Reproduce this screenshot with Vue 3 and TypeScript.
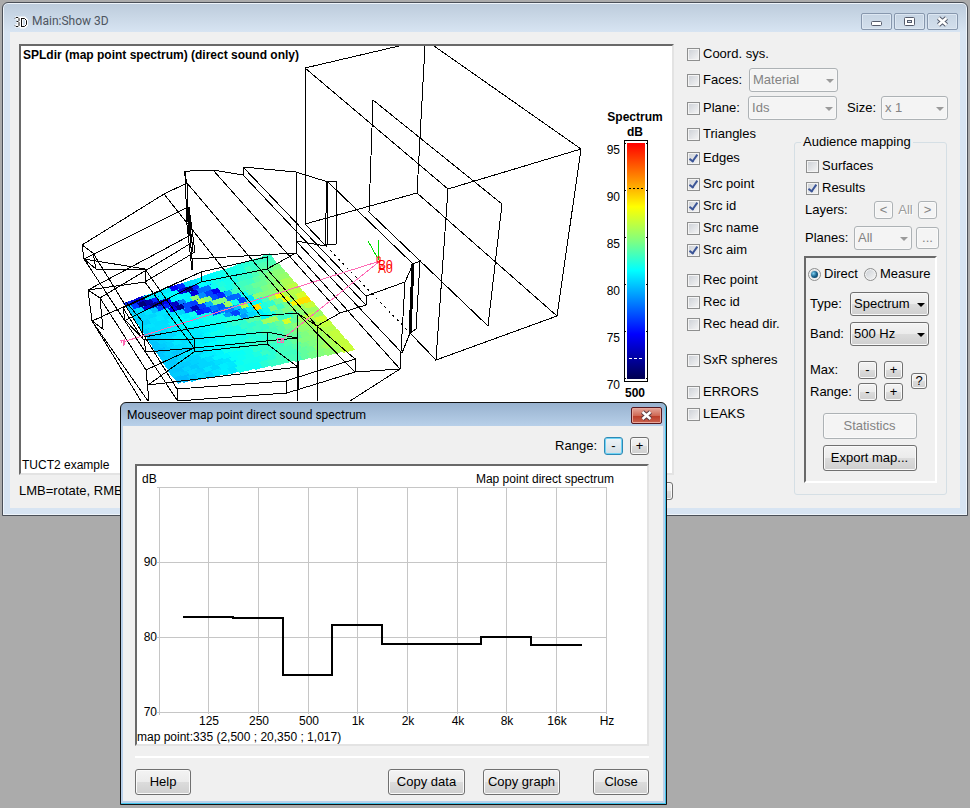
<script setup lang="ts">
import { ref } from 'vue'

interface Toggle {
  id: string
  label: string
  on: boolean
}

interface Cell {
  points: string
  fill: string
}

const topToggle = ref<Toggle>({ id: 'coord', label: 'Coord. sys.', on: false })
const toggleGroups = ref<Toggle[][]>([
  [{ id: 'triangles', label: 'Triangles', on: false }],
  [{ id: 'edges', label: 'Edges', on: true }],
  [
    { id: 'src-point', label: 'Src point', on: true },
    { id: 'src-id', label: 'Src id', on: true },
    { id: 'src-name', label: 'Src name', on: false },
    { id: 'src-aim', label: 'Src aim', on: true },
  ],
  [
    { id: 'rec-point', label: 'Rec point', on: false },
    { id: 'rec-id', label: 'Rec id', on: false },
    { id: 'rec-head', label: 'Rec head dir.', on: false },
  ],
  [{ id: 'spheres', label: 'SxR spheres', on: false }],
  [
    { id: 'errors', label: 'ERRORS', on: false },
    { id: 'leaks', label: 'LEAKS', on: false },
  ],
])
const mappingToggles = ref<Toggle[]>([
  { id: 'surfaces', label: 'Surfaces', on: false },
  { id: 'results', label: 'Results', on: true },
])
const source = ref('direct')

// Room edges, one polyline per entry
const edges: string[] = [
  // stage house
  '399,46 305,68 305,224 417,193 425,46',
  '434,46 581,149 557,316 436,360 448,189 581,149',
  '305,68 448,189',
  '417,193 557,316',
  '305,224 326,246',
  '410,333 436,360',
  '373,100 502,204 488,326 369,212 373,100',
  // ceiling profile and beams
  '184,172 196,170 213,170 243,175 243,167 296,172 328,182 413,264',
  '213,170 340,313',
  '243,175 366,305',
  '243,167 366,296',
  '296,172 296,253',
  '296,241 326,246',
  '296,241 402,353',
  '296,253 400,369',
  '187,183 297,313',
  '164,194 260,315',
  '405,282 366,296 366,305 340,313 317,326',
  // pillar
  '328,181 336,181 336,244 327,245 328,181',
  '327,181 325,246',
  // left gallery
  '187,183 164,194 82,245 84,259 188,207',
  '82,245 93,253 96,269 84,259 145,269 96,269',
  '145,269 145,282 88,290 92,321 103,329 100,298 88,290 189,236',
  '100,298 193,242',
  '145,282 195,252',
  '93,253 177,389',
  '84,259 177,400',
  '145,269 194,339',
  '145,282 194,348',
  '92,321 201,272',
  '92,321 141,401',
  '92,321 148,401',
  '100,298 146,370 149,401',
  // left wall bundle
  '184,172 187,183 188,207 190,236 193,270',
  '185,172 187,225 192,270',
  '189,207 195,252',
  '188,207 193,252',
  // stalls
  '192,259 296,253 267,269 201,282 126,320',
  '267,269 267,257 201,272 201,282',
  '201,272 123,308 125,320 144,340 146,352 194,348 297,338',
  '123,308 142,338 144,340',
  '126,302 142,321 142,338',
  '144,340 194,339 267,332 297,338',
  '194,339 194,352 267,344 267,332',
  '267,344 298,367',
  '194,352 148,385',
  '194,348 146,370',
  '144,337 260,316 297,313 317,326',
  '148,385 298,367',
  '177,401 177,389 286,381 355,359 355,372 287,393 177,401',
  '286,381 287,393',
  '297,313 298,401',
  '298,361 298,390',
  '317,326 317,401',
  '317,326 355,359',
  '297,313 355,372',
  '267,269 317,326',
  '355,372 400,369 350,401',
  '400,369 405,282 413,264 420,261 416,329 410,333 402,353',
]

const heavyEdges: string[] = ['413,264 410,333', '188,207 190,236']

const stops: [number, number[]][] = [
  [70, [0, 0, 80]],
  [74.8, [0, 0, 255]],
  [81.4, [0, 255, 255]],
  [84.6, [128, 255, 128]],
  [88.2, [255, 255, 0]],
  [90.2, [255, 176, 0]],
  [95, [255, 0, 0]],
]

function colourAt(level: number): string {
  const v = Math.max(70, Math.min(95, level))
  let i = 1
  while (i < stops.length - 1 && v > stops[i][0]) i++
  const [v0, c0] = stops[i - 1]
  const [v1, c1] = stops[i]
  const t = (v - v0) / (v1 - v0)
  return `rgb(${c0.map((c, k) => Math.round(c + (c1[k] - c) * t)).join(',')})`
}

function noise(i: number, j: number): number {
  const n = Math.sin(i * 127.1 + j * 311.7) * 43758.5453
  return n - Math.floor(n)
}

function levelAt(x: number, y: number, u: number, v: number, n: number): number {
  let level = 80.2 + u * 3 + u * u * 2 + (n - 0.5) * 0.7
  level += Math.max(0, u - 0.7) * 5 * Math.min(1, v * 3)
  level -= Math.max(0, 0.3 - v) * u * 8
  if (u < 0.35) level += 0.3 - v * 0.8
  const first = 284 + (x - 160) * 0.17
  const second = 302 + (x - 127) * 0.08
  const fade = Math.max(0, 1 - Math.max(0, x - 170) / 190)
  const hit = (d: number, w: number) => Math.max(0, 1 - Math.pow(Math.abs(d) / w, 3))
  level -= hit(y - first, 5) * (3 + 7 * n) * fade * 1.2
  level -= hit(y - second, 6) * (4 + 6 * n) * fade * 1.1
  if (x > 195 && y > first + 5 && y < second - 5) level += 2 + 2.5 * n
  if (x > 250 && x < 330 && y > 294 && y < 322) level += n * 3.5
  return level
}

// Bilinear grid over the audience plane
function buildCells(): Cell[] {
  const a = [125, 303]
  const b = [269, 254]
  const c = [354, 349]
  const d = [178, 382]
  const cols = 22
  const rows = 20
  const at = (u: number, v: number): number[] =>
    [0, 1].map(
      (k) =>
        a[k] * (1 - u) * (1 - v) + b[k] * u * (1 - v) + c[k] * u * v + d[k] * (1 - u) * v,
    )
  const out: Cell[] = []
  for (let j = 0; j < rows; j++) {
    for (let i = 0; i < cols; i++) {
      const shift = j % 2 ? 0.3 : 0
      const u0 = Math.max(0, (i - shift) / cols)
      const u1 = i === cols - 1 ? 1 : (i + 1 - shift) / cols
      const u = (u0 + u1) / 2
      const v = (j + 0.5) / rows
      const [x, y] = at(u, v)
      // cells are wide and nearly level
      const w = (at(u1, v)[0] - at(u0, v)[0]) / 2 + 2
      const h = 3
      const pts = [
        [x - w - 1, y - h + 2],
        [x + w - 3, y - h - 1],
        [x + w + 1, y + h - 1],
        [x - w + 3, y + h + 2],
      ]
      out.push({
        points: pts.map((p) => p.map((q) => Math.round(q)).join(',')).join(' '),
        fill: colourAt(levelAt(x, y, u, v, noise(i, j))),
      })
    }
  }
  return out
}

const cells = buildCells()

const scale = [95, 90, 85, 80, 75, 70].map((value, i) => ({ value, y: 143 + i * 47 }))

const bands = [
  { x: 208, label: '125' },
  { x: 258, label: '250' },
  { x: 308, label: '500' },
  { x: 357, label: '1k' },
  { x: 407, label: '2k' },
  { x: 457, label: '4k' },
  { x: 506, label: '8k' },
  { x: 556, label: '16k' },
  { x: 606, label: 'Hz' },
]
const levels = [
  { y: 562, label: '90' },
  { y: 637, label: '80' },
  { y: 712, label: '70' },
]
</script>

<template>
  <div class="desktop">
    <section class="window main" aria-label="Main:Show 3D">
      <header class="titlebar">
        <svg class="app-icon" width="15" height="15" viewBox="0 0 15 15" aria-hidden="true">
          <g fill="none" stroke="#fff" stroke-width="3">
            <path d="M1 4h3.500l.5 3-1 1 1 1-.5 3h-3.500M7.500 4h3l2 2v5l-2 2h-3z" />
          </g>
          <g fill="none" stroke="#111" stroke-width="1">
            <path d="M1 4.500l1-1h2l1 1v2l-1 1h-1.500M4 7.500l1 1v3l-1 1h-2l-1-1" />
            <path d="M7.500 4v9M7.500 4.500h3l2 2v4l-2 2h-3" />
          </g>
        </svg>
        <h1>Main:Show 3D</h1>
        <div class="caption-buttons">
          <button type="button" class="caption" aria-label="Minimize">
            <svg width="29" height="15" viewBox="0 0 29 15">
              <rect x="9.500" y="7.500" width="10" height="4" rx="1" fill="#fff" stroke="#555b6b" />
            </svg>
          </button>
          <button type="button" class="caption" aria-label="Maximize">
            <svg width="29" height="15" viewBox="0 0 29 15">
              <rect x="9.500" y="3.500" width="10" height="8" rx="1" fill="#fff" stroke="#555b6b" />
              <rect x="12.500" y="6.500" width="4" height="2" fill="#d5e0ec" stroke="#555b6b" />
            </svg>
          </button>
          <button type="button" class="caption" aria-label="Close">
            <svg width="29" height="15" viewBox="0 0 29 15">
              <path d="M10.500 4l8 7M18.500 4l-8 7" stroke="#555b6b" stroke-width="4.500" />
              <path d="M10.500 4l8 7M18.500 4l-8 7" stroke="#fff" stroke-width="2.500" />
            </svg>
          </button>
        </div>
      </header>

      <div class="client">
        <div class="view">
          <div class="sunken">
            <svg class="scene" viewBox="21 46 651 427" role="img" aria-label="Room model">
              <defs>
                <linearGradient id="jet" x1="0" y1="0" x2="0" y2="1">
                  <stop offset="0" stop-color="#f00" />
                  <stop offset="0.190" stop-color="#ffb000" />
                  <stop offset="0.270" stop-color="#ff0" />
                  <stop offset="0.415" stop-color="#80ff80" />
                  <stop offset="0.540" stop-color="#0ff" />
                  <stop offset="0.810" stop-color="#00f" />
                  <stop offset="1" stop-color="#000050" />
                </linearGradient>
              </defs>
              <g shape-rendering="crispEdges">
                <polygon
                  v-for="(cell, i) in cells"
                  :key="i"
                  :points="cell.points"
                  :fill="cell.fill"
                />
              </g>
              <g class="edges">
                <polyline v-for="(edge, i) in edges" :key="i" :points="edge" />
                <polyline v-for="edge in heavyEdges" :key="edge" :points="edge" class="heavy" />
                <polyline points="326,246 410,333" class="dotted" />
              </g>
              <g class="aim">
                <path d="M123 342L380 261L280 341" />
                <path d="M277 338h6v4h-6zM281 338v5M120 340h3v6M121 340v3M124 339v6" />
              </g>
              <path class="axes" d="M368 241l9 16M379 240l-1 20" />
              <path class="marker" d="M377 257h3v5h-3z" />
              <text x="378" y="269" class="source">B0</text>
              <text x="378" y="273" class="source">A0</text>

              <text x="23" y="59" class="bold">SPLdir (map point spectrum) (direct sound only)</text>
              <text x="22" y="469">TUCT2 example</text>

              <text x="635" y="121" class="bold mid">Spectrum</text>
              <text x="635" y="136" class="bold mid">dB</text>
              <g shape-rendering="crispEdges">
                <rect x="624.500" y="140.500" width="23" height="241" fill="#fff" stroke="#000" />
                <rect x="627" y="143" width="18" height="236" fill="url(#jet)" />
                <path d="M629 188.500h14" stroke="#000" stroke-dasharray="2 2" />
                <path d="M629 358.500h14" stroke="#fff" stroke-dasharray="3 2" />
                <path
                  v-for="tick in scale"
                  :key="tick.value"
                  :d="`M624 ${tick.y}.5h2M646 ${tick.y}.5h2`"
                  stroke="#000"
                />
              </g>
              <text v-for="tick in scale" :key="tick.value" x="620" :y="tick.y + 11" class="end">
                {{ tick.value }}
              </text>
              <text x="635" y="397" class="bold mid">500</text>
            </svg>
          </div>
          <footer class="hint">
            <span>LMB=rotate, RMB</span>
            <button type="button" class="btn small" aria-label="View options"></button>
          </footer>
        </div>

        <div class="side">
          <label class="check first">
            <input v-model="topToggle.on" type="checkbox" />{{ topToggle.label }}
          </label>
          <div class="row">
            <label class="check"><input type="checkbox" />Faces:</label>
            <span class="combo wide disabled">
              <select aria-label="Faces" disabled><option>Material</option></select>
            </span>
          </div>
          <div class="row">
            <label class="check"><input type="checkbox" />Plane:</label>
            <span class="combo wide disabled">
              <select aria-label="Plane" disabled><option>Ids</option></select>
            </span>
            <label class="size" for="size">Size:</label>
            <span class="combo medium disabled">
              <select id="size" disabled><option>x 1</option></select>
            </span>
          </div>

          <div class="lower">
            <div class="toggles">
              <div v-for="(group, g) in toggleGroups" :key="g" class="group">
                <label v-for="item in group" :key="item.id" class="check">
                  <input v-model="item.on" type="checkbox" />{{ item.label }}
                </label>
              </div>
            </div>

            <fieldset class="mapping">
              <legend>Audience mapping</legend>
              <label v-for="item in mappingToggles" :key="item.id" class="check">
                <input v-model="item.on" type="checkbox" />{{ item.label }}
              </label>
              <div class="layers">
                <span>Layers:</span>
                <button type="button" class="btn small" disabled>&lt;</button>
                <span class="all">All</span>
                <button type="button" class="btn small" disabled>&gt;</button>
              </div>
              <div class="planes">
                <label for="planes">Planes:</label>
                <span class="combo disabled">
                  <select id="planes" disabled><option>All</option></select>
                </span>
                <button type="button" class="btn more" disabled>...</button>
              </div>

              <div class="panel">
                <div class="radios">
                  <label class="check">
                    <input v-model="source" type="radio" name="source" value="direct" />Direct
                  </label>
                  <label class="check">
                    <input v-model="source" type="radio" name="source" value="measure" />Measure
                  </label>
                </div>
                <div class="field">
                  <label for="type">Type:</label>
                  <span class="combo">
                    <select id="type"><option>Spectrum</option></select>
                  </span>
                </div>
                <div class="field">
                  <label for="band">Band:</label>
                  <span class="combo">
                    <select id="band"><option>500 Hz</option></select>
                  </span>
                </div>
                <div class="steppers">
                  <div class="steps">
                    <span>Max:</span>
                    <button type="button" class="btn small">-</button>
                    <button type="button" class="btn small">+</button>
                    <span>Range:</span>
                    <button type="button" class="btn small">-</button>
                    <button type="button" class="btn small">+</button>
                  </div>
                  <button type="button" class="btn help">?</button>
                </div>
                <button type="button" class="btn action" disabled>Statistics</button>
                <button type="button" class="btn action">Export map...</button>
              </div>
            </fieldset>
          </div>
        </div>
      </div>
    </section>

    <section class="window dialog" role="dialog" aria-label="Mouseover map point direct sound spectrum">
      <header class="titlebar">
        <h2>Mouseover map point direct sound spectrum</h2>
        <button type="button" class="caption close" aria-label="Close">
          <svg width="29" height="15" viewBox="0 0 29 15">
            <path d="M10.500 4l8 7M18.500 4l-8 7" stroke="#5a3a40" stroke-width="4.500" />
            <path d="M10.500 4l8 7M18.500 4l-8 7" stroke="#fff" stroke-width="2.500" />
          </svg>
        </button>
      </header>
      <div class="body">
        <div class="range">
          <span>Range:</span>
          <button type="button" class="btn small focus">-</button>
          <button type="button" class="btn small">+</button>
        </div>
        <div class="sunken">
          <svg class="graph" viewBox="137 466 510 278" role="img" aria-label="Map point direct spectrum">
            <g class="grid">
              <path d="M159.500 487v228M157 487.500H607" />
              <path v-for="level in levels" :key="level.y" :d="`M157 ${level.y}.5H607`" />
              <path v-for="band in bands" :key="band.x" :d="`M${band.x}.5 487V714`" />
            </g>
            <path
              class="trace"
              d="M183 617H233V618H283V675H332V625H382V644H481V637H531V645H582"
            />
            <text x="142" y="483">dB</text>
            <text x="614" y="483" class="end">Map point direct spectrum</text>
            <text v-for="level in levels" :key="level.y" x="157" :y="level.y + 4" class="end">
              {{ level.label }}
            </text>
            <text v-for="band in bands" :key="band.x" :x="band.x + 1" y="725" class="mid">
              {{ band.label }}
            </text>
            <text x="137" y="741">map point:335 (2,500 ; 20,350 ; 1,017)</text>
          </svg>
        </div>
        <hr />
        <footer class="actions">
          <button type="button" class="btn">Help</button>
          <button type="button" class="btn copy">Copy data</button>
          <button type="button" class="btn copy">Copy graph</button>
          <button type="button" class="btn">Close</button>
        </footer>
      </div>
    </section>
  </div>
</template>

<style>
body {
  margin: 0;
  background: #ababab;
}
</style>

<style scoped>
.desktop {
  position: relative;
  box-sizing: border-box;
  min-height: 100vh;
  padding: 2px;
  background: #ababab;
  font-family: 'Liberation Sans', Arial, sans-serif;
  font-size: 13px;
  line-height: 16px;
  color: #000;
}
.desktop *,
.desktop *::after {
  box-sizing: border-box;
}
.window {
  border-radius: 6px 6px 0 0;
}
.main {
  border: 1px solid #4a4f57;
  padding: 0 7px 7px;
  background: linear-gradient(#bccbdb, #d7e4f2 29px);
  box-shadow: inset 0 0 0 1px #eef4fa;
}
.titlebar {
  display: flex;
  align-items: center;
}
.titlebar h1,
.titlebar h2 {
  flex: 1;
  margin: 0;
  font: 12px/16px Roboto, sans-serif;
  font-weight: 400;
}
.main .titlebar {
  height: 29px;
  padding: 7px 2px 0 4px;
  gap: 3px;
}
.main .titlebar h1 {
  color: #4d5560;
}
.app-icon {
  flex: none;
}
.caption-buttons {
  display: flex;
  gap: 2px;
}
.caption {
  display: block;
  width: 31px;
  height: 17px;
  padding: 0;
  border: 1px solid #8797ad;
  border-radius: 2px;
  background: linear-gradient(#c6d4e3, #d3dfec);
  box-shadow: inset 0 0 0 1px #dde7f2;
}
.caption svg {
  display: block;
}
.client {
  display: flex;
  gap: 13px;
  padding: 12px 12px 0 9px;
  background: #f0f0f0;
}
.view {
  flex: 1;
  min-width: 0;
}
.sunken {
  border: 2px solid;
  border-color: #696969 #e3e3e3 #e3e3e3 #696969;
  background: #fff;
}
.scene,
.graph {
  display: block;
  width: 100%;
  height: auto;
  font-size: 12px;
}
.bold {
  font-weight: 700;
}
.mid {
  text-anchor: middle;
}
.end {
  text-anchor: end;
}
.edges {
  fill: none;
  stroke: #000;
  stroke-width: 1;
  shape-rendering: crispEdges;
}
.edges .heavy {
  stroke-width: 3;
}
.edges .dotted {
  stroke-dasharray: 2 4;
}
.aim {
  fill: none;
  stroke: #ff69b4;
  shape-rendering: crispEdges;
}
.axes {
  fill: none;
  stroke: #00e000;
  shape-rendering: crispEdges;
}
.marker {
  fill: none;
  stroke: #f00;
}
.source {
  fill: #f00;
}
.grid {
  fill: none;
  stroke: #c6c6c6;
  shape-rendering: crispEdges;
}
.trace {
  fill: none;
  stroke: #000;
  stroke-width: 2;
  shape-rendering: crispEdges;
}
.hint {
  display: flex;
  align-items: center;
  justify-content: space-between;
  height: 33px;
  padding: 0 1px 2px 0;
}
.side {
  display: flex;
  flex: none;
  flex-direction: column;
  width: 261px;
}
.check {
  display: flex;
  align-items: center;
  height: 22px;
  gap: 3px;
  white-space: nowrap;
}
.check.first {
  height: 20px;
}
.check input {
  position: relative;
  flex: none;
  width: 13px;
  height: 13px;
  margin: 0;
  appearance: none;
  border: 1px solid #8e8f8f;
  background: linear-gradient(135deg, #cbcfd5, #f6f6f6);
  box-shadow: inset 0 0 0 1px #f4f4f4;
}
.check input[type='checkbox']:checked::after {
  content: '';
  position: absolute;
  left: 3px;
  top: 0;
  width: 5px;
  height: 9px;
  border: solid #3b5597;
  border-width: 0 2px 2px 0;
  transform: rotate(35deg);
}
.check input[type='radio'] {
  border-radius: 50%;
}
.check input[type='radio']:checked::after {
  content: '';
  position: absolute;
  left: 2px;
  top: 2px;
  width: 7px;
  height: 7px;
  border-radius: 50%;
  background: radial-gradient(circle at 35% 35%, #7fd0f0, #17608c 50%, #0c3450);
}
.row {
  display: flex;
  align-items: center;
  height: 24px;
  margin-top: 4px;
}
.row .check {
  width: 62px;
}
.size {
  margin: 0 5px 0 10px;
}
.combo {
  position: relative;
  display: block;
  flex: 1;
  height: 24px;
}
.combo.wide {
  flex: none;
  width: 89px;
}
.combo.medium {
  flex: none;
  width: 67px;
}
.combo select {
  display: block;
  width: 100%;
  height: 100%;
  padding: 0 0 0 3px;
  appearance: none;
  border: 1px solid #707070;
  border-radius: 3px;
  background: linear-gradient(#f3f3f3, #ebebeb 50%, #dcdcdc 50%, #cfcfcf);
  box-shadow: inset 0 0 0 1px #f8f8f8;
  color: #000;
  font: inherit;
}
.combo::after {
  content: '';
  position: absolute;
  top: 11px;
  right: 4px;
  border: 4px solid transparent;
  border-top-color: #000;
  border-bottom: 0;
}
.combo.disabled select {
  border-color: #adb2b5;
  background: #f4f4f4;
  color: #838383;
  opacity: 1;
}
.combo.disabled::after {
  border-top-color: #9a9a9a;
}
.lower {
  display: flex;
  align-items: flex-start;
  justify-content: space-between;
  padding-right: 1px;
}
.toggles {
  margin-top: 3px;
}
.group:nth-child(2) {
  margin-top: 2px;
}
.group:nth-child(3) {
  margin-top: 4px;
}
.group:nth-child(4) {
  margin-top: 8px;
}
.group:nth-child(5) {
  margin-top: 14px;
}
.group:nth-child(6) {
  margin-top: 10px;
}
.mapping {
  width: 153px;
  min-width: 0;
  margin: 14px 0 0;
  padding: 5px 9px 11px;
  border: 1px solid #d5dfe5;
  border-radius: 3px;
}
.mapping legend {
  margin-left: -3px;
  padding: 0 2px;
}
.mapping > .check {
  padding-left: 2px;
}
.btn {
  height: 26px;
  padding: 0;
  border: 1px solid #707070;
  border-radius: 3px;
  background: linear-gradient(#f3f3f3, #ebebeb 50%, #dcdcdc 50%, #cfcfcf);
  box-shadow: inset 0 0 0 1px #fafafa;
  color: #000;
  font: inherit;
}
.btn:disabled {
  border-color: #adb2b5;
  background: #f4f4f4;
  color: #838383;
}
.btn.small {
  width: 19px;
  height: 18px;
  line-height: 14px;
}
.btn.focus {
  border-color: #2d89b5;
  background: linear-gradient(#eef4f8, #d3dee5);
  box-shadow: inset 0 0 0 1px #6fd3f5;
}
.layers,
.planes {
  display: flex;
  align-items: center;
  padding-left: 1px;
}
.layers {
  height: 22px;
}
.layers > :first-child {
  flex: 1;
}
.all {
  width: 25px;
  text-align: center;
  color: #9c9c9c;
  text-shadow: 1px 1px #fff;
}
.planes {
  height: 34px;
  margin-right: -2px;
  gap: 4px;
}
.planes label {
  width: 45px;
}
.btn.more {
  width: 23px;
  height: 22px;
  line-height: 14px;
}
.panel {
  display: flex;
  flex-direction: column;
  align-items: center;
  height: 227px;
  margin-top: 1px;
  padding: 5px 6px 0 4px;
  border: 2px solid;
  border-color: #696969 #fff #fff #696969;
}
.radios {
  display: flex;
  align-self: flex-start;
  margin-left: -2px;
  gap: 6px;
}
.radios .check {
  gap: 3px;
}
.field {
  display: flex;
  align-items: center;
  width: 100%;
  height: 30px;
}
.radios + .field {
  margin-top: 4px;
}
.field label {
  width: 40px;
}
.steppers {
  display: flex;
  align-items: center;
  justify-content: space-between;
  width: 100%;
  margin-top: 10px;
}
.steps {
  display: grid;
  grid-template-columns: 41px 19px 19px;
  grid-auto-rows: 22px;
  align-items: center;
  column-gap: 7px;
}
.btn.help {
  width: 16px;
  height: 16px;
  margin-right: 2px;
  line-height: 14px;
}
.btn.action {
  flex: none;
  width: 94px;
  margin-top: 6px;
}
.steppers + .btn.action {
  margin-top: 10px;
}

.dialog {
  position: absolute;
  left: 120px;
  top: 402px;
  width: 547px;
  max-width: calc(100% - 120px);
  border: 1px solid #111;
  padding: 1px 3px 3px 2px;
  background: linear-gradient(#98b2cf, #b9d1ea 24px);
  box-shadow: inset -1px -1px #42c3ea;
}
.dialog .titlebar {
  height: 22px;
  padding: 0 1px 0 4px;
}
.caption.close {
  border-color: #561820;
  background: linear-gradient(#e5a79b, #d06a56 50%, #bb3a26 50%, #c96350);
  box-shadow: inset 0 0 0 1px #e9a89c;
}
.body {
  padding: 11px 14px 6px 12px;
  background: #f0f0f0;
}
.range {
  display: flex;
  align-items: center;
  justify-content: flex-end;
  margin-bottom: 9px;
  gap: 7px;
}
.dialog hr {
  height: 2px;
  margin: 10px 0 11px;
  border: 0;
  background: #fff;
}
.actions {
  display: flex;
}
.actions .btn {
  width: 56px;
}
.actions .copy {
  width: 77px;
  margin-right: 18px;
}
.actions .btn:first-child {
  margin-right: auto;
}
.actions .btn:last-child {
  margin-left: 15px;
}
</style>
